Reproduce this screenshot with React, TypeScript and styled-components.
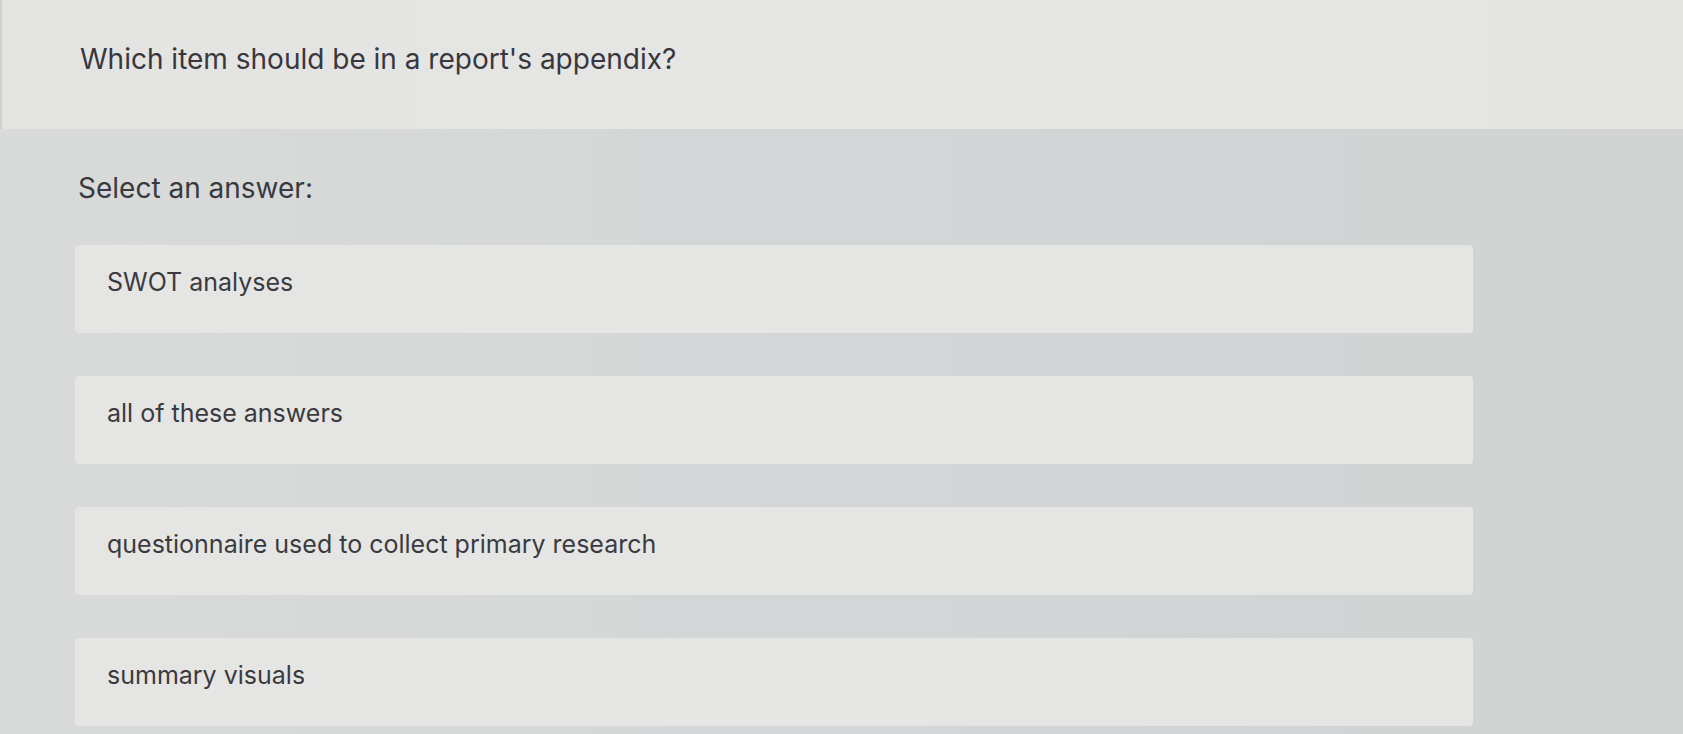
import React from "react";
import styled, { createGlobalStyle } from "styled-components";

const Global = createGlobalStyle`
  html, body { margin: 0; padding: 0; }
  body {
    font-family: Inter, "Noto Sans", sans-serif;
    background: #d4d7d7;
    width: 1683px;
    height: 734px;
    overflow: hidden;
  }
`;

const Page = styled.div`
  display: flex;
  flex-direction: column;
  width: 1683px;
  height: 734px;
  overflow: hidden;
`;

const Header = styled.header`
  height: 129px;
  box-sizing: border-box;
  padding: 42px 0 0 78px;
  background: linear-gradient(90deg, #e3e3e1 0%, #e6e6e4 50%, #e4e5e3 100%);
  border-left: 2px solid #cfcfcd;
`;

const Title = styled.h1`
  margin: 0;
  font-size: 28px;
  font-weight: 400;
  color: #38373e;
  line-height: 34px;
`;

const Body = styled.main`
  flex: 1;
  display: flex;
  flex-direction: column;
  padding: 42px 210px 0 75px;
  background: linear-gradient(90deg, #d9dbda 0%, #d4d7d7 40%, #d0d4d4 80%, #d2d4d3 100%);
`;

const Prompt = styled.p`
  margin: 0 0 0 3px;
  font-size: 28px;
  line-height: 34px;
  color: #3a3940;
`;

const Options = styled.ul`
  list-style: none;
  margin: 40px 0 0;
  padding: 0;
  display: flex;
  flex-direction: column;
  gap: 43px;
`;

const Option = styled.li`
  height: 88px;
  box-sizing: border-box;
  display: flex;
  align-items: center;
  padding: 0 0 14px 32px;
  border-radius: 4px;
  background: #e5e6e3;
  font-size: 25px;
  color: #3b3a41;
`;

const answers = [
  "SWOT analyses",
  "all of these answers",
  "questionnaire used to collect primary research",
  "summary visuals",
];

export default function App() {
  return (
    <Page>
      <Global />
      <Header>
        <Title>Which item should be in a report's appendix?</Title>
      </Header>
      <Body>
        <Prompt>Select an answer:</Prompt>
        <Options>
          {answers.map((a) => (
            <Option key={a}>{a}</Option>
          ))}
        </Options>
      </Body>
    </Page>
  );
}
